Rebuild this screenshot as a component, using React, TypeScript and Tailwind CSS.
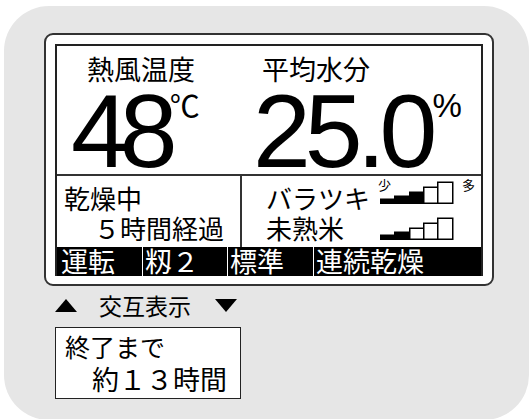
import React from "react";

const jp = { fontFamily: '"Noto Sans CJK JP", "Noto Sans", sans-serif' };
const num = { fontFamily: '"Liberation Sans", Arial, sans-serif' };

function Steps({ filled }: { filled: number }) {
  const xs = [0, 14, 29, 43, 57, 72];
  const hs = [4, 7, 11, 16, 21];
  return (
    <svg width="74" height="24" viewBox="0 0 74 24" className="block">
      {hs.map((h, i) => {
        const x = xs[i] + 0.75;
        const w = xs[i + 1] - xs[i];
        return (
          <rect
            key={i}
            x={x}
            y={23.25 - h}
            width={w}
            height={h}
            fill={i < filled ? "#000" : "#fff"}
            stroke="#000"
            strokeWidth="1.5"
          />
        );
      })}
    </svg>
  );
}

function Tri({ down }: { down?: boolean }) {
  return (
    <svg width="22" height="13" viewBox="0 0 22 13" className="block">
      <polygon points={down ? "0,0 22,0 11,13" : "11,0 22,13 0,13"} fill="#000" />
    </svg>
  );
}

export default function App() {
  return (
    <div className="w-[529px] h-[419px] bg-white overflow-hidden text-black" style={jp}>
      <div className="ml-[4px] mt-[6px] w-[525px] h-[414px] rounded-[45px] bg-[#e6e6e6] pl-[40px] pt-[27px]">
        <div className="w-[450px] h-[253px] rounded-[9px] border-2 border-[#333] bg-white px-[9px] pt-[9px] pb-[8px]">
          <div className="h-full border-2 border-b-0 border-[#222] flex flex-col">
            {/* top */}
            <div className="h-[130px] border-b-2 border-[#333] flex">
              <div className="w-[200px] flex flex-col">
                <div className="pl-[30px] pt-[8px] text-[27px] leading-[30px]">熱風温度</div>
                <div className="flex items-start pl-[14px] mt-[2px]">
                  <span className="text-[104px] leading-[90px] tracking-[-9px]" style={num}>48</span>
                  <span className="text-[30px] leading-[30px] ml-[1px] mt-[3px]">℃</span>
                </div>
              </div>
              <div className="flex-1 flex flex-col">
                <div className="pl-[5px] pt-[8px] text-[27px] leading-[30px]">平均水分</div>
                <div className="flex items-start -ml-[4px] mt-[2px]">
                  <span className="text-[104px] leading-[90px] tracking-[-6px]" style={num}>25.0</span>
                  <span className="text-[33px] leading-[30px] ml-[1px] mt-[5px]" style={num}>%</span>
                </div>
              </div>
            </div>
            {/* middle */}
            <div className="flex-1 flex">
              <div className="w-[185px] border-r-2 border-[#333] flex flex-col text-[26px] leading-[30px] pt-[7px]">
                <div className="pl-[7px]">乾燥中</div>
                <div className="pl-[37px]">５時間経過</div>
              </div>
              <div className="flex-1 flex flex-col text-[26px] leading-[30px] pt-[7px] pl-[24px]">
                <div className="flex items-start relative h-[30px]">
                  <span className="w-[114px]">バラツキ</span>
                  <div className="-mt-[3px]"><Steps filled={3} /></div>
                  <span className="absolute left-[112px] -top-[5px] text-[13px] leading-[14px]">少</span>
                  <span className="absolute left-[196px] -top-[5px] text-[13px] leading-[14px]">多</span>
                </div>
                <div className="flex items-start h-[30px]">
                  <span className="w-[114px]">未熟米</span>
                  <div className="mt-[3px]"><Steps filled={2} /></div>
                </div>
              </div>
            </div>
            {/* bar */}
            <div className="h-[29px] bg-black text-white flex text-[27px] leading-[28px]">
              <div className="w-[85px] pl-[4px]">運転</div>
              <div className="w-[85px] border-l border-white pl-[2px]">籾２</div>
              <div className="w-[86px] border-l border-white pl-[2px]">標準</div>
              <div className="flex-1 border-l border-white pl-[2px]">連続乾燥</div>
            </div>
          </div>
        </div>
        {/* below */}
        <div className="flex items-center pl-[11px] mt-[7px] h-[24px] text-[23px] leading-[24px]">
          <Tri />
          <span className="ml-[22px]">交互表示</span>
          <span className="ml-[24px]"><Tri down /></span>
        </div>
        <div className="ml-[11px] mt-[10px] w-[186px] h-[72px] border-[1.5px] border-[#222] bg-white pt-[3px]">
          <div className="pl-[9px] text-[25px] leading-[31px]">終了まで</div>
          <div className="pl-[36px] text-[27px] leading-[34px]">約１３時間</div>
        </div>
      </div>
    </div>
  );
}
